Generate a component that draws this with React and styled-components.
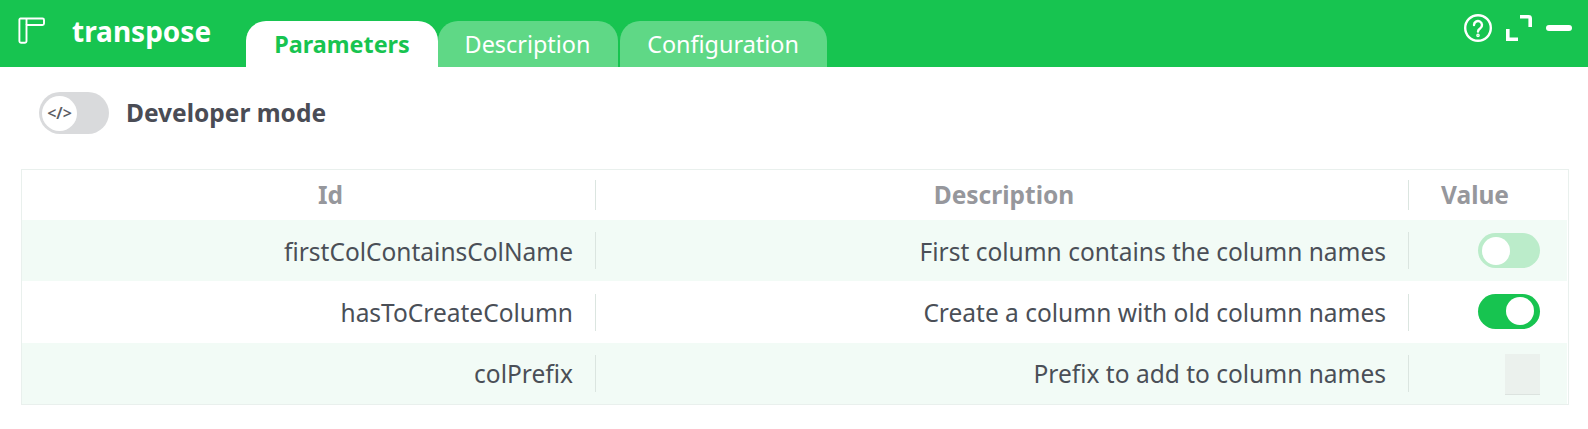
import React from 'react'
import styled, { createGlobalStyle } from 'styled-components'

const rows = [
  { id: 'firstColContainsColName', description: 'First column contains the column names', type: 'off', lineHeight: 39 },
  { id: 'hasToCreateColumn', description: 'Create a column with old column names', type: 'on', lineHeight: 37 },
  { id: 'colPrefix', description: 'Prefix to add to column names', type: 'input', lineHeight: 37 },
]

const App = () => (
  <Page>
    <GlobalStyle />
    <TopBar>
      <LogoIcon />
      <NodeName>transpose</NodeName>
      <Tabs>
        <Tab $active>Parameters</Tab>
        <Tab $width={180}>Description</Tab>
        <Tab $width={207} $gap={2}>Configuration</Tab>
      </Tabs>
      <Actions>
        <HelpIcon />
        <ExpandIcon />
        <MinimizeBar />
      </Actions>
    </TopBar>
    <DevRow>
      <DevSwitch>
        <DevKnob>&lt;/&gt;</DevKnob>
      </DevSwitch>
      <DevLabel>Developer mode</DevLabel>
    </DevRow>
    <Table>
      <HeaderRow>
        <HeaderCell $shift={44}>Id</HeaderCell>
        <HeaderCell $shift={4}>Description</HeaderCell>
        <HeaderCell $shift={-26} $last>Value</HeaderCell>
      </HeaderRow>
      {rows.map((row, i) => (
        <Row key={row.id} $odd={i % 2 === 0} $height={i === 1 ? 62 : 61}>
          <Cell $lineHeight={row.lineHeight}>{row.id}</Cell>
          <Cell $lineHeight={row.lineHeight}>{row.description}</Cell>
          <ValueCell>
            {row.type === 'input' ? <ValueInput /> : (
              <Switch $on={row.type === 'on'}>
                <Knob />
              </Switch>
            )}
          </ValueCell>
        </Row>
      ))}
    </Table>
  </Page>
)

const LogoIcon = () => (
  <LogoSvg viewBox="0 0 27 27" fill="none" stroke="#fff" strokeWidth="1.9" strokeLinejoin="round">
    <path d="M2.5 1.5H24.5a1.5 1.5 0 0 1 1.5 1.5V6.5a1.5 1.5 0 0 1-1.5 1.5H8.5V24a1.8 1.8 0 0 1-1.8 1.8H3.2A1.8 1.8 0 0 1 1.4 24V2.6a1.1 1.1 0 0 1 1.1-1.1Z" />
    <path d="M8.5 8V1.5" />
  </LogoSvg>
)

const HelpIcon = () => (
  <ActionSvg $width={30} viewBox="0 0 30 30" fill="none" stroke="#fff" strokeWidth="2.4" strokeLinecap="round">
    <circle cx="15" cy="15" r="12.8" />
    <path d="M11 12a4 4 0 1 1 6.3 3.3c-1.5 1-2.3 1.7-2.3 3.2" />
    <circle cx="15" cy="22.4" r="0.6" fill="#fff" />
  </ActionSvg>
)

const ExpandIcon = () => (
  <ActionSvg $width={26} $gap={13} viewBox="0 0 26 26" fill="none" stroke="#fff" strokeWidth="3.6">
    <path d="M14 1.8h8.5a1.7 1.7 0 0 1 1.7 1.7V12" />
    <path d="M1.8 14v10.2H12" />
  </ActionSvg>
)

const GlobalStyle = createGlobalStyle`
  html, body {
    margin: 0;
    padding: 0;
    background: #fff;
  }

  body {
    font-family: "Noto Sans", "Open Sans", sans-serif;
  }
`

const Page = styled.div`
  width: 1588px;
  height: 429px;
  overflow: hidden;
  background: #fff;
`

const TopBar = styled.div`
  display: flex;
  align-items: flex-start;
  height: 67px;
  padding-left: 18px;
  background: #17c450;
`

const LogoSvg = styled.svg`
  width: 27px;
  height: 27px;
  margin-top: 17px;
  flex: none;
`

const NodeName = styled.div`
  width: 174px;
  margin-left: 27px;
  margin-top: 13px;
  font-size: 28px;
  line-height: 37px;
  font-weight: 700;
  color: #fff;
`

const Tabs = styled.div`
  display: flex;
  align-self: flex-end;
`

const Tab = styled.div`
  box-sizing: border-box;
  width: ${({ $active, $width }) => ($active ? 192 : $width)}px;
  height: 46px;
  margin-left: ${({ $gap }) => $gap || 0}px;
  padding-right: ${({ $active }) => ($active ? 0 : 1)}px;
  text-align: center;
  font-size: 23.4px;
  line-height: 46px;
  border-radius: 20px 20px 0 0;
  font-weight: ${({ $active }) => ($active ? 700 : 400)};
  color: ${({ $active }) => ($active ? '#17c450' : '#fff')};
  background: ${({ $active }) => ($active ? '#fff' : '#5fd886')};
`

const Actions = styled.div`
  display: flex;
  align-items: center;
  margin-left: auto;
  margin-right: 16px;
  margin-top: 13px;
`

const ActionSvg = styled.svg`
  width: ${({ $width }) => $width}px;
  height: ${({ $width }) => $width}px;
  margin-left: ${({ $gap }) => $gap || 0}px;
`

const MinimizeBar = styled.div`
  width: 26px;
  height: 6px;
  margin-left: 14px;
  border-radius: 3px;
  background: #fff;
`

const DevRow = styled.div`
  display: flex;
  align-items: center;
  height: 42px;
  margin-top: 25px;
  padding-left: 39px;
`

const DevSwitch = styled.div`
  box-sizing: border-box;
  display: flex;
  align-items: center;
  width: 70px;
  height: 42px;
  padding-left: 3px;
  border-radius: 21px;
  background: #d9dadc;
`

const DevKnob = styled.div`
  width: 35px;
  height: 35px;
  border-radius: 50%;
  background: #fff;
  text-align: center;
  font-size: 16px;
  line-height: 34px;
  font-weight: 600;
  color: #5b5d63;
`

const DevLabel = styled.div`
  margin-left: 17px;
  margin-bottom: 2px;
  font-size: 24.5px;
  font-weight: 700;
  color: #4a4c55;
`

const Table = styled.div`
  box-sizing: border-box;
  width: 1548px;
  height: 236px;
  margin-top: 35px;
  margin-left: 21px;
  padding-right: 1px;
  border: 1px solid #e9f0ed;
`

const HeaderRow = styled.div`
  display: grid;
  grid-template-columns: 574px 813px 1fr;
  align-items: center;
  height: 50px;
`

const Row = styled.div`
  display: grid;
  grid-template-columns: 574px 813px 1fr;
  align-items: center;
  height: ${({ $height }) => $height}px;
  background: ${({ $odd }) => ($odd ? '#f2fbf6' : '#fff')};
`

const HeaderCell = styled.div`
  box-sizing: border-box;
  height: 30px;
  padding-left: ${({ $shift }) => Math.max($shift, 0)}px;
  padding-right: ${({ $shift }) => Math.max(-$shift, 0)}px;
  text-align: center;
  font-size: 24.5px;
  line-height: 30px;
  font-weight: 700;
  color: #96979c;
  border-right: ${({ $last }) => ($last ? 'none' : '1px solid #dbe5e0')};
`

const Cell = styled.div`
  box-sizing: border-box;
  height: 37px;
  padding-right: 22px;
  text-align: right;
  font-size: 24.5px;
  line-height: ${({ $lineHeight }) => $lineHeight}px;
  color: #4a4f57;
  border-right: 1px solid #dbe5e0;
`

const ValueCell = styled.div`
  display: flex;
  justify-content: flex-end;
  align-items: center;
  padding-right: 27px;
`

const Switch = styled.div`
  box-sizing: border-box;
  display: flex;
  align-items: center;
  justify-content: ${({ $on }) => ($on ? 'flex-end' : 'flex-start')};
  width: 62px;
  height: 35px;
  margin-bottom: ${({ $on }) => ($on ? 2 : 0)}px;
  padding: 0 6px 0 4px;
  border-radius: 18px;
  background: ${({ $on }) => ($on ? '#17c450' : '#bbecca')};
`

const Knob = styled.div`
  width: 28px;
  height: 28px;
  border-radius: 50%;
  background: #fff;
`

const ValueInput = styled.div`
  box-sizing: border-box;
  width: 35px;
  height: 41px;
  margin-top: 2px;
  background: #ebf1ed;
  border-bottom: 1px solid #dce3df;
`

export default App
